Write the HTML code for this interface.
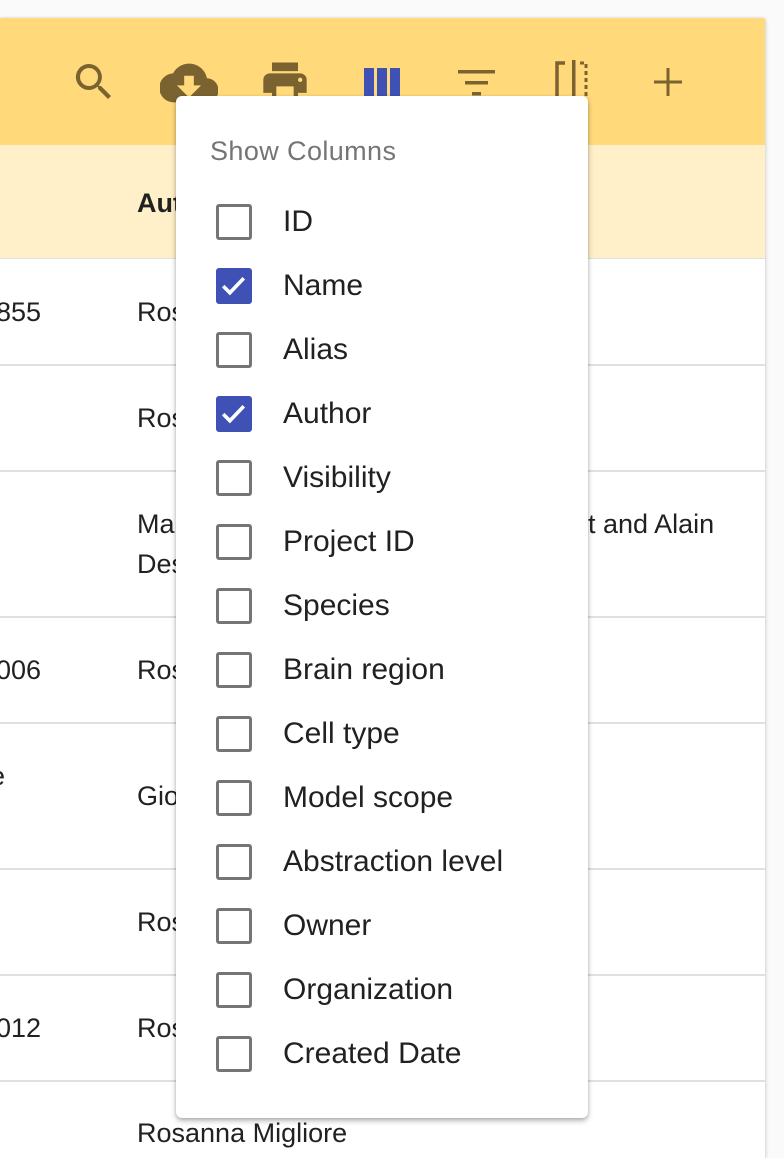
<!DOCTYPE html>
<html><head><meta charset="utf-8"><style>
*{margin:0;padding:0;box-sizing:border-box}
body{width:784px;height:1140px;overflow:hidden;background:#fafafa;font-family:"Liberation Sans",Roboto,sans-serif;position:relative}
.paper{position:absolute;left:0;top:18px;width:765px;height:1140px;background:#fff;box-shadow:0 1px 4px rgba(0,0,0,.25)}
.bar{position:absolute;left:0;top:0;width:765px;height:127px;background:#ffd97a}
.head{position:absolute;left:0;top:127px;width:765px;height:114px;background:#fff0c9;border-bottom:1px solid #e0e0e0}
.line{position:absolute;left:0;width:765px;height:2px;background:#e0e0e0}
.t{position:absolute;font-size:27px;color:#212121;white-space:nowrap}
.ic{position:absolute;top:62px}
.menu{position:absolute;left:176px;top:96px;width:412px;height:1022px;background:#fff;border-radius:6px;box-shadow:0 3px 6px rgba(0,0,0,.25),0 1px 3px rgba(0,0,0,.15)}
.title{position:absolute;left:34px;top:40px;font-size:27px;color:#757575;letter-spacing:.4px}
.item{position:absolute;left:40px;height:36px;width:360px}
.cb{position:absolute;left:0;top:0;width:36px;height:36px;border:3.5px solid #757575;border-radius:3px}
.cb.on{background:#3f51b5;border-color:#3f51b5}
.lbl{position:absolute;left:67px;top:1px;font-size:30px;color:#212121;white-space:nowrap}
</style></head><body>
<div class="paper">
<div class="bar"></div>
<div class="head"></div>
<div class="t" style="left:137px;top:170px;font-weight:bold">Aut</div>
<div class="line" style="top:346px"></div>
<div class="line" style="top:452px"></div>
<div class="line" style="top:598px"></div>
<div class="line" style="top:704px"></div>
<div class="line" style="top:850px"></div>
<div class="line" style="top:956px"></div>
<div class="line" style="top:1062px"></div>
<div class="t" style="left:-4px;top:279px">855</div>
<div class="t" style="left:137px;top:279px">Ros</div>
<div class="t" style="left:137px;top:385px">Ros</div>
<div class="t" style="left:137px;top:491px">Ma</div>
<div class="t" style="left:137px;top:531px">Des</div>
<div class="t" style="left:588px;top:491px">t and Alain</div>
<div class="t" style="left:-4px;top:637px">006</div>
<div class="t" style="left:137px;top:637px">Ros</div>
<div class="t" style="left:-10px;top:743px">e</div>
<div class="t" style="left:137px;top:763px">Gio</div>
<div class="t" style="left:137px;top:889px">Ros</div>
<div class="t" style="left:-4px;top:995px">012</div>
<div class="t" style="left:137px;top:995px">Ros</div>
<div class="t" style="left:137px;top:1100px">Rosanna Migliore</div>
</div>
<svg class="ic" style="left:70px;top:58px" width="48" height="48" viewBox="0 0 24 24"><path fill="#7a6330" d="M15.5 14h-.8l-.3-.3A6.5 6.5 0 1 0 9.5 16a6.5 6.5 0 0 0 4.2-1.6l.3.3v.8l5 5 1.5-1.5-5-5zm-6 0A4.5 4.5 0 1 1 14 9.5 4.5 4.5 0 0 1 9.5 14z"/></svg>
<svg class="ic" style="left:160px;top:54px" width="58" height="58" viewBox="0 0 24 24"><path fill="#7a6330" d="M19.4 10A7.5 7.5 0 0 0 5.4 8 6 6 0 0 0 6 20h13a5 5 0 0 0 .4-10zM17 13l-5 5-5-5h3V9h4v4h3z"/></svg>
<svg class="ic" style="left:259px;top:56px" width="52" height="52" viewBox="0 0 24 24"><path fill="#7a6330" d="M19 8H5a3 3 0 0 0-3 3v6h4v4h12v-4h4v-6a3 3 0 0 0-3-3zm-3 11H8v-5h8v5zm3-7a1 1 0 1 1 0-2 1 1 0 0 1 0 2zm-1-9H6v4h12V3z"/></svg>
<svg class="ic" style="left:364px;top:68px" width="36" height="30"><rect x="0" y="0" width="10" height="30" fill="#3f51b5"/><rect x="13" y="0" width="10" height="30" fill="#3f51b5"/><rect x="26" y="0" width="10" height="30" fill="#3f51b5"/></svg>
<svg class="ic" style="left:458px;top:68px" width="38" height="30"><rect x="0" y="2" width="37" height="3.5" fill="#7a6330"/><rect x="7" y="13" width="23" height="3.5" fill="#7a6330"/><rect x="14" y="24" width="9" height="3.5" fill="#7a6330"/></svg>
<svg class="ic" style="left:553px;top:58px" width="40" height="44"><path d="M12 5H4v36" fill="none" stroke="#7a6330" stroke-width="3.5"/><rect x="19" y="2" width="3.5" height="40" fill="#7a6330"/><path d="M27 5h6v36h-6" fill="none" stroke="#7a6330" stroke-width="3" stroke-dasharray="4 3"/></svg>
<svg class="ic" style="left:652px;top:66px" width="32" height="32"><rect x="14.5" y="2" width="3" height="28" fill="#7a6330"/><rect x="2" y="14.5" width="28" height="3" fill="#7a6330"/></svg>
<div class="menu">
<div class="title">Show Columns</div>
<div class="item" style="top:108px"><div class="cb"></div><div class="lbl">ID</div></div>
<div class="item" style="top:172px"><div class="cb on"><svg width="29" height="29" viewBox="0 0 24 24"><path d="M3.5 12.5l5.5 5.5L20.5 6" fill="none" stroke="#fff" stroke-width="3"/></svg></div><div class="lbl">Name</div></div>
<div class="item" style="top:236px"><div class="cb"></div><div class="lbl">Alias</div></div>
<div class="item" style="top:300px"><div class="cb on"><svg width="29" height="29" viewBox="0 0 24 24"><path d="M3.5 12.5l5.5 5.5L20.5 6" fill="none" stroke="#fff" stroke-width="3"/></svg></div><div class="lbl">Author</div></div>
<div class="item" style="top:364px"><div class="cb"></div><div class="lbl">Visibility</div></div>
<div class="item" style="top:428px"><div class="cb"></div><div class="lbl">Project ID</div></div>
<div class="item" style="top:492px"><div class="cb"></div><div class="lbl">Species</div></div>
<div class="item" style="top:556px"><div class="cb"></div><div class="lbl">Brain region</div></div>
<div class="item" style="top:620px"><div class="cb"></div><div class="lbl">Cell type</div></div>
<div class="item" style="top:684px"><div class="cb"></div><div class="lbl">Model scope</div></div>
<div class="item" style="top:748px"><div class="cb"></div><div class="lbl">Abstraction level</div></div>
<div class="item" style="top:812px"><div class="cb"></div><div class="lbl">Owner</div></div>
<div class="item" style="top:876px"><div class="cb"></div><div class="lbl">Organization</div></div>
<div class="item" style="top:940px"><div class="cb"></div><div class="lbl">Created Date</div></div>
</div>
</body></html>
